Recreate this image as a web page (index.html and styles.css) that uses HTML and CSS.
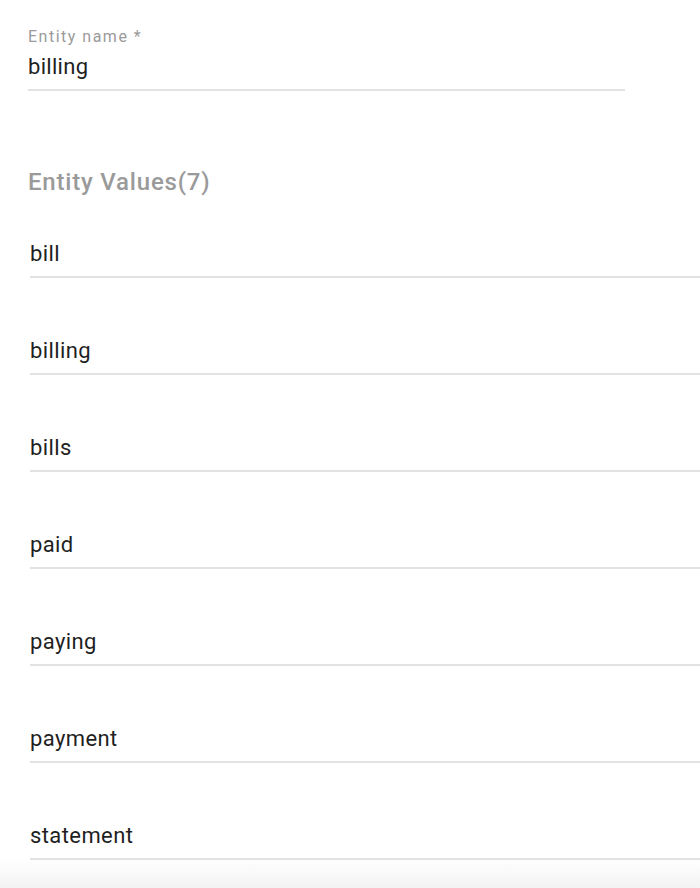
FILE: index.html
```html
<!DOCTYPE html>
<html>
<head>
<meta charset="utf-8">
<link rel="stylesheet" href="styles.css">
</head>
<body>
<div class="page">
  <div class="name-field">
    <div class="label">Entity name *</div>
    <div class="name-value">billing</div>
  </div>
  <h2 class="heading">Entity Values(7)</h2>
  <div class="values">
    <div class="value-row">bill</div>
    <div class="value-row">billing</div>
    <div class="value-row">bills</div>
    <div class="value-row">paid</div>
    <div class="value-row">paying</div>
    <div class="value-row">payment</div>
    <div class="value-row">statement</div>
  </div>
</div>
<div class="bottom-fade"></div>
</body>
</html>
```
FILE: styles.css
```css
html, body {
  margin: 0;
  padding: 0;
  background: #ffffff;
  overflow: hidden;
}
body {
  font-family: Roboto, "Liberation Sans", sans-serif;
  color: #1f1f1f;
  height: 888px;
  position: relative;
}
.page {
  padding: 27px 0 0 28px;
}
.name-field {
  width: 597px;
  border-bottom: 2px solid #e2e2e2;
  padding-bottom: 6px;
}
.label {
  font-size: 16px;
  letter-spacing: 1.5px;
  color: #9a9a9a;
  line-height: 20px;
}
.name-value {
  margin-top: 4px;
  font-size: 22px;
  letter-spacing: 0.3px;
  line-height: 32px;
  color: #1f1f1f;
}
.heading {
  margin: 76px 0 0 0;
  font-size: 24px;
  font-weight: 500;
  letter-spacing: 0.8px;
  color: #9a9a9a;
  line-height: 30px;
}
.values {
  margin-left: 2px;
  margin-top: 42px;
}
.value-row {
  font-size: 22px;
  letter-spacing: 0.4px;
  line-height: 30px;
  padding-bottom: 7px;
  border-bottom: 2px solid #e2e2e2;
  margin-bottom: 58px;
}
.bottom-fade {
  position: absolute;
  left: 0;
  right: 0;
  bottom: 0;
  height: 30px;
  background: linear-gradient(to bottom, rgba(240,240,240,0), rgba(240,240,240,0.8));
}
```
